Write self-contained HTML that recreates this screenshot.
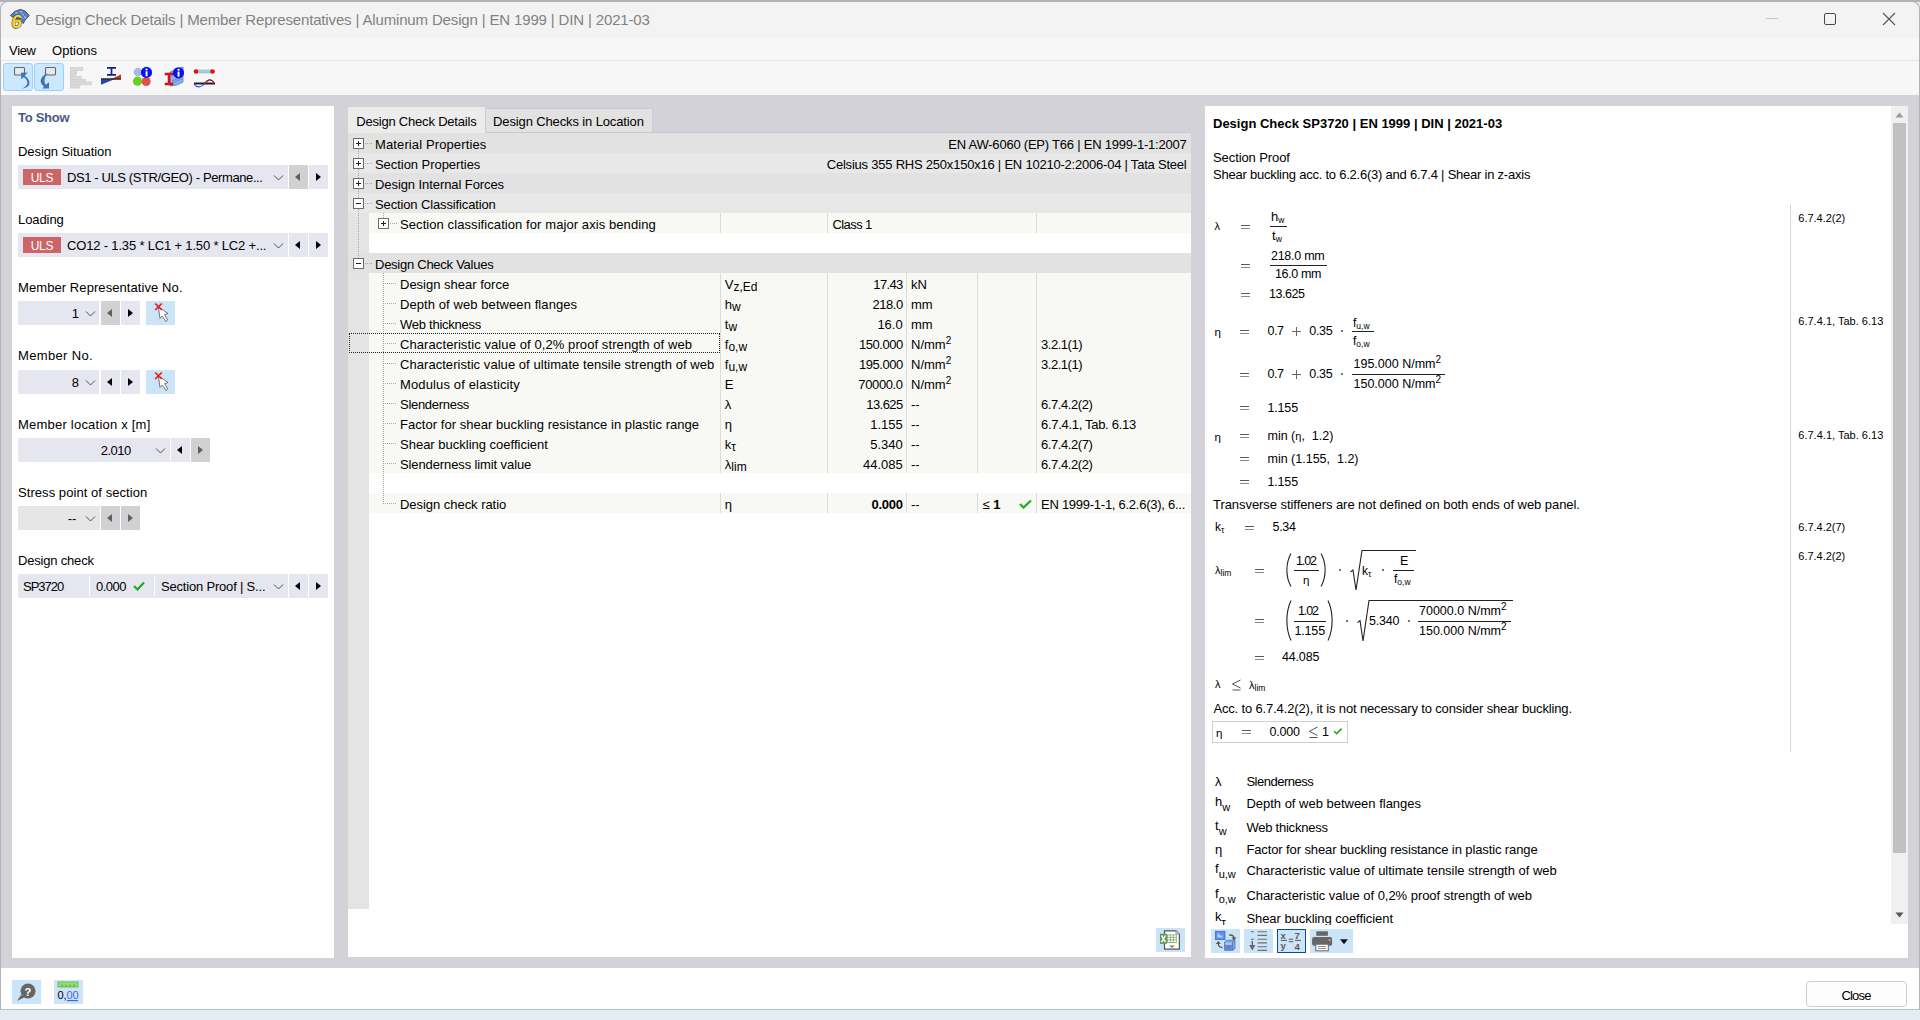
<!DOCTYPE html><html><head><meta charset="utf-8"><style>
*{box-sizing:border-box;margin:0;padding:0}
html,body{width:1920px;height:1020px;overflow:hidden}
body{position:relative;background:#e3ebf4;font-family:"Liberation Sans",sans-serif;font-size:13px;color:#000}
.a{position:absolute}
.t{position:absolute;white-space:nowrap;line-height:16px}
.nav{position:absolute;background:#e6e6f0;height:24px;width:19px}
.nav.dk{background:#d1d1d3}
.tri-l{position:absolute;left:6px;top:8px;width:0;height:0;border-top:4.5px solid transparent;border-bottom:4.5px solid transparent;border-right:5px solid #000}
.tri-r{position:absolute;left:7px;top:8px;width:0;height:0;border-top:4.5px solid transparent;border-bottom:4.5px solid transparent;border-left:5px solid #000}
.dk .tri-l{border-right-color:#5e5e5e}
.dk .tri-r{border-left-color:#5e5e5e}
.uls{position:absolute;background:#cc6666;color:#fff;width:38px;height:16px;font-size:12px;line-height:19px;text-align:center;letter-spacing:-0.2px}
sub{font-size:12px;vertical-align:-2px;line-height:0}
sup{font-size:10px;vertical-align:5px;line-height:0}
</style></head><body>
<div class="a" style="left:0px;top:0px;width:1920px;height:2px;background:#b0b4b9;"></div>
<div class="a" style="left:0;top:1px;width:1920px;height:1009px;background:#f3f3f3;border:1px solid #b3b3b3;border-bottom-color:#b9bec6;border-radius:8px 8px 0 0;overflow:hidden"></div>
<div class="a" style="left:1px;top:38px;width:1918px;height:22px;background:#f7f7f7;"></div>
<div class="a" style="left:1px;top:60px;width:1918px;height:1px;background:#e5e5e5;"></div>
<div class="a" style="left:1px;top:61px;width:1918px;height:34px;background:#f7f7f7;"></div>
<div class="a" style="left:1px;top:95px;width:1918px;height:873px;background:#d3d2d8;"></div>
<div class="a" style="left:1px;top:968px;width:1918px;height:41px;background:#ffffff;"></div>
<svg class="a" style="left:8px;top:7px" width="24" height="24" viewBox="0 0 24 24">
<path d="M2.4 8.5 L7 4.3 L12.5 2.4 L17 4 L21.2 8.5 L17 13 L15.3 16.5 L11 12 L6 11 Z" fill="#4f82cc" stroke="#4a4f5a" stroke-width="1"/>
<path d="M7.5 6 L9.5 5.5 M12 4.5 L14 5 M9 8.5 L11 8 M14 7 L16 8 M16 10 L18 10.5 M13 10 L14.5 11.5" stroke="#9cc4f4" stroke-width="1.3"/>
<text x="3.2" y="21.2" font-family="Liberation Sans" font-weight="bold" font-size="19" fill="#f6d22e" stroke="#3c3c3c" stroke-width="1" paint-order="stroke" transform="skewX(-8) translate(2.5,0)">6</text>
</svg>
<div class="t" style="left:35.0px;top:12px;font-size:15px;color:#828282;letter-spacing:-0.15px;">Design Check Details | Member Representatives | Aluminum Design | EN 1999 | DIN | 2021-03</div>
<div class="a" style="left:1766px;top:18px;width:12px;height:1px;background:#c4c4c4;"></div>
<div class="a" style="left:1824px;top:13px;width:12px;height:12px;border:1px solid #4a4a4a;border-radius:2px"></div>
<svg class="a" style="left:1882px;top:12px" width="14" height="14"><path d="M1 1 L13 13 M13 1 L1 13" stroke="#555" stroke-width="1.1"/></svg>
<div class="t" style="left:9.0px;top:43px;letter-spacing:-0.31px;">View</div>
<div class="t" style="left:52.0px;top:43px;letter-spacing:0.03px;">Options</div>
<div class="a" style="left:3px;top:63px;width:30px;height:28px;background:#cce8ff;border:1px solid #99d1ff;border-radius:3px"></div>
<div class="a" style="left:34px;top:63px;width:30px;height:28px;background:#cce8ff;border:1px solid #99d1ff;border-radius:3px"></div>
<svg class="a" style="left:3px;top:63px" width="30" height="28">
<rect x="11.5" y="4.5" width="10" height="7.5" rx="1" fill="#e8e8e8" stroke="#666" stroke-width="1.1"/>
<path d="M18 9.8 L24.6 9.5 L18.4 16.5 Z" fill="#3f74b0"/>
<path d="M20 12 C25 14 27.5 18.5 26 22 C24.8 24 21.5 25.5 19 25.6 C22.5 24 24.8 21.5 24.3 19 C23.8 16.5 22 15 20 13.8 Z" fill="#3f74b0"/>
</svg>
<svg class="a" style="left:34px;top:63px" width="30" height="28">
<rect x="11.5" y="4.5" width="10" height="7.5" rx="1" fill="#e8e8e8" stroke="#666" stroke-width="1.1"/>
<path d="M8.2 25.6 L15 25.6 L15 19 Z" fill="#3f74b0"/>
<path d="M13.5 10 C9.5 12 6 15.5 6.8 19 C7.3 21.5 9 23 11 24.2 L12.5 22.3 C10.8 20.8 10.2 18.5 10.6 16.5 C11 14 12.2 12 13.5 10 Z" fill="#3f74b0"/>
</svg>
<svg class="a" style="left:66px;top:63px" width="30" height="28" fill="#dcdcdc" stroke="#cfcfcf" stroke-width="0.8">
<rect x="4.4" y="4.4" width="12.4" height="3.1"/><rect x="4.4" y="7.7" width="6.2" height="3"/><rect x="4.4" y="11" width="5.1" height="2.3"/>
<rect x="4.4" y="13.5" width="10.6" height="2.8"/><rect x="4.4" y="16.5" width="15.1" height="2.3"/><rect x="4.4" y="19" width="21" height="2.8"/><rect x="4.4" y="22" width="9.3" height="3"/>
</svg>
<svg class="a" style="left:96px;top:63px" width="30" height="28">
<path d="M11 4.8 H20 M11 11.8 H20 M15.5 4.8 V11.8" stroke="#1a1a90" stroke-width="1.7"/>
<path d="M5 21.8 L5 16 L19 16 Z" fill="#2648a8"/>
<path d="M25 11.5 L25 16 L15 16 Z" fill="#d03010"/>
<rect x="5" y="15.2" width="20" height="1.6" fill="#333"/>
</svg>
<svg class="a" style="left:128px;top:63px" width="30" height="28">
<circle cx="10" cy="9" r="4.3" fill="#a9b8e6"/>
<circle cx="9.5" cy="18.2" r="4.6" fill="#6ad020"/>
<circle cx="18.2" cy="18.5" r="4.5" fill="#e05050"/>
<circle cx="18.5" cy="9.4" r="5.6" fill="#0a14e8"/>
<rect x="17.6" y="8.3" width="1.9" height="5" fill="#fff"/><rect x="17.6" y="5.6" width="1.9" height="1.8" fill="#fff"/>
</svg>
<svg class="a" style="left:160px;top:63px" width="30" height="28">
<path d="M10 9 L17 6 L23 4 L23 19 L17 22 L10 23 Z" fill="#8fb0ea" stroke="#5b7fc0" stroke-width="0.8"/>
<path d="M12 18 L22 14 M12 20 L22 16" stroke="#5b7fc0" stroke-width="0.8"/>
<path d="M5 10 H13 V12 H10 V20 H13 V22 H5 V20 H8 V12 H5 Z" fill="#f01010" stroke="#901010" stroke-width="0.5"/>
<circle cx="18.5" cy="9.8" r="5.6" fill="#0a14e8"/>
<rect x="17.6" y="8.6" width="1.9" height="5" fill="#fff"/><rect x="17.6" y="5.9" width="1.9" height="1.8" fill="#fff"/>
</svg>
<svg class="a" style="left:190px;top:63px" width="30" height="28">
<rect x="7" y="7" width="14" height="3" fill="#9cd0f8" stroke="#aaa" stroke-width="0.6"/>
<circle cx="6" cy="8.5" r="2.3" fill="#e01010"/><circle cx="22.5" cy="8.5" r="2.3" fill="#e01010"/>
<rect x="4" y="19.5" width="21" height="2" fill="#222"/>
<path d="M4 21 C7 25 11 25 14.5 20.5 C18 16 21 15.5 24 19.5" fill="none" stroke="#2a3ae8" stroke-width="1.2"/>
<path d="M14.5 20.5 C18 16 21 15.5 24 19.5" fill="none" stroke="#d01818" stroke-width="1.2"/>
</svg>
<div class="a" style="left:12px;top:106px;width:322px;height:852px;background:#fff;"></div>
<div class="a" style="left:348px;top:106px;width:843px;height:851px;background:#fff;"></div>
<div class="a" style="left:1205px;top:106px;width:703px;height:852px;background:#fff;"></div>
<div class="t" style="left:18.0px;top:110px;font-weight:bold;color:#4b5785;letter-spacing:-0.28px;">To Show</div>
<div class="t" style="left:18.0px;top:144px;letter-spacing:-0.08px;">Design Situation</div>
<div class="t" style="left:18.0px;top:212px;letter-spacing:-0.08px;">Loading</div>
<div class="t" style="left:18.0px;top:280px;letter-spacing:0.08px;">Member Representative No.</div>
<div class="t" style="left:18.0px;top:348px;letter-spacing:0.35px;">Member No.</div>
<div class="t" style="left:18.0px;top:417px;letter-spacing:0.22px;">Member location x [m]</div>
<div class="t" style="left:18.0px;top:485px;letter-spacing:0.06px;">Stress point of section</div>
<div class="t" style="left:18.0px;top:553px;letter-spacing:-0.19px;">Design check</div>
<div class="a" style="left:18px;top:165px;width:270px;height:24px;background:#e6e6f0;"></div>
<div class="uls" style="left:23px;top:169px">ULS</div>
<div class="t" style="left:67.0px;top:170px;letter-spacing:-0.39px;">DS1 - ULS (STR/GEO) - Permane...</div>
<svg class="a" style="left:272px;top:174px" width="12" height="8"><polyline points="2,1.5 6.5,6 11,1.5" fill="none" stroke="#505050" stroke-width="1"/></svg>
<div class="nav dk" style="left:289px;top:165px"><div class="tri-l"></div></div>
<div class="nav" style="left:309px;top:165px"><div class="tri-r"></div></div>
<div class="a" style="left:18px;top:233px;width:270px;height:24px;background:#e6e6f0;"></div>
<div class="uls" style="left:23px;top:237px">ULS</div>
<div class="t" style="left:67.0px;top:238px;letter-spacing:-0.17px;">CO12 - 1.35 * LC1 + 1.50 * LC2 +...</div>
<svg class="a" style="left:272px;top:242px" width="12" height="8"><polyline points="2,1.5 6.5,6 11,1.5" fill="none" stroke="#505050" stroke-width="1"/></svg>
<div class="nav" style="left:289px;top:233px"><div class="tri-l"></div></div>
<div class="nav" style="left:309px;top:233px"><div class="tri-r"></div></div>
<div class="a" style="left:18px;top:301px;width:81px;height:24px;background:#e6e6f0;"></div>
<div class="t" style="right:1841.0px;top:306px;">1</div>
<svg class="a" style="left:84px;top:310px" width="12" height="8"><polyline points="2,1.5 6.5,6 11,1.5" fill="none" stroke="#505050" stroke-width="1"/></svg>
<div class="nav dk" style="left:101px;top:301px"><div class="tri-l"></div></div>
<div class="nav" style="left:121px;top:301px"><div class="tri-r"></div></div>
<div class="a" style="left:146px;top:301px;width:29px;height:24px;background:#cce4f7"><svg class="a" style="left:0;top:0" width="29" height="24"><path d="M12.3 5.7 L14 17.5 L16.3 15 L19.8 20.5 L21.7 19 L18.6 13.6 L22 12.5 Z" fill="#fff" stroke="#666" stroke-width="0.9"/><path d="M9.2 2.5 L15.8 9 M15.8 2.5 L9.2 9" stroke="#f01818" stroke-width="1.7"/></svg></div>
<div class="a" style="left:18px;top:370px;width:81px;height:24px;background:#e6e6f0;"></div>
<div class="t" style="right:1841.0px;top:375px;">8</div>
<svg class="a" style="left:84px;top:379px" width="12" height="8"><polyline points="2,1.5 6.5,6 11,1.5" fill="none" stroke="#505050" stroke-width="1"/></svg>
<div class="nav" style="left:101px;top:370px"><div class="tri-l"></div></div>
<div class="nav" style="left:121px;top:370px"><div class="tri-r"></div></div>
<div class="a" style="left:146px;top:370px;width:29px;height:24px;background:#cce4f7"><svg class="a" style="left:0;top:0" width="29" height="24"><path d="M12.3 5.7 L14 17.5 L16.3 15 L19.8 20.5 L21.7 19 L18.6 13.6 L22 12.5 Z" fill="#fff" stroke="#666" stroke-width="0.9"/><path d="M9.2 2.5 L15.8 9 M15.8 2.5 L9.2 9" stroke="#f01818" stroke-width="1.7"/></svg></div>
<div class="a" style="left:18px;top:438px;width:152px;height:24px;background:#e6e6f0;"></div>
<div class="t" style="right:1789.4px;top:443px;letter-spacing:-0.53px;">2.010</div>
<svg class="a" style="left:154px;top:447px" width="12" height="8"><polyline points="2,1.5 6.5,6 11,1.5" fill="none" stroke="#505050" stroke-width="1"/></svg>
<div class="nav" style="left:171px;top:438px"><div class="tri-l"></div></div>
<div class="nav dk" style="left:191px;top:438px"><div class="tri-r"></div></div>
<div class="a" style="left:18px;top:506px;width:82px;height:24px;background:#e6e6e6;"></div>
<div class="t" style="right:1843.7px;top:511px;">--</div>
<svg class="a" style="left:84px;top:515px" width="12" height="8"><polyline points="2,1.5 6.5,6 11,1.5" fill="none" stroke="#505050" stroke-width="1"/></svg>
<div class="nav dk" style="left:101px;top:506px"><div class="tri-l"></div></div>
<div class="nav dk" style="left:121px;top:506px"><div class="tri-r"></div></div>
<div class="a" style="left:18px;top:574px;width:270px;height:24px;background:#e6e6f0;"></div>
<div class="a" style="left:89px;top:576px;width:1px;height:20px;background:#fff;"></div>
<div class="a" style="left:154px;top:576px;width:1px;height:20px;background:#fff;"></div>
<div class="t" style="left:23.0px;top:579px;letter-spacing:-1.01px;">SP3720</div>
<div class="t" style="left:96.0px;top:579px;letter-spacing:-0.51px;">0.000</div>
<svg class="a" style="left:133px;top:581px" width="12" height="10"><path d="M1 5 L4.5 8.5 L11 1.5" fill="none" stroke="#22aa22" stroke-width="2.2"/></svg>
<div class="t" style="left:161.0px;top:579px;letter-spacing:-0.19px;">Section Proof | S...</div>
<svg class="a" style="left:272px;top:583px" width="12" height="8"><polyline points="2,1.5 6.5,6 11,1.5" fill="none" stroke="#505050" stroke-width="1"/></svg>
<div class="nav" style="left:289px;top:574px"><div class="tri-l"></div></div>
<div class="nav" style="left:309px;top:574px"><div class="tri-r"></div></div>
<div class="a" style="left:348px;top:106px;width:843px;height:27px;background:#d3d2d8;"></div>
<div class="a" style="left:348px;top:107px;width:137px;height:26px;background:#ececec;"></div>
<div class="a" style="left:485px;top:108px;width:168px;height:25px;background:#e2e2e2;border:1px solid #cbcbd6;border-bottom:none"></div>
<div class="a" style="left:485px;top:132px;width:706px;height:1px;background:#cbcbd6;"></div>
<div class="t" style="left:356.2px;top:114px;letter-spacing:-0.20px;">Design Check Details</div>
<div class="t" style="left:493.1px;top:114px;letter-spacing:-0.13px;">Design Checks in Location</div>
<div class="a" style="left:348px;top:133px;width:843px;height:20px;background:#e2e2e2;"></div>
<div class="a" style="left:348px;top:153px;width:843px;height:20px;background:#e8e8e8;"></div>
<div class="a" style="left:348px;top:173px;width:843px;height:20px;background:#e2e2e2;"></div>
<div class="a" style="left:348px;top:193px;width:843px;height:20px;background:#e8e8e8;"></div>
<div class="a" style="left:348px;top:213px;width:21px;height:696px;background:#e4e4e4;"></div>
<div class="a" style="left:369px;top:213px;width:822px;height:20px;background:#f8f8f4;"></div>
<div class="a" style="left:348px;top:253px;width:843px;height:20px;background:#e2e2e2;"></div>
<div class="a" style="left:369px;top:273px;width:822px;height:200px;background:#f8f8f4;"></div>
<div class="a" style="left:369px;top:493px;width:822px;height:20px;background:#f8f8f4;"></div>
<div class="a" style="left:720px;top:213px;width:1px;height:20px;background:#dcdcdc;"></div>
<div class="a" style="left:827px;top:213px;width:1px;height:20px;background:#dcdcdc;"></div>
<div class="a" style="left:1036px;top:213px;width:1px;height:20px;background:#dcdcdc;"></div>
<div class="a" style="left:720px;top:273px;width:1px;height:200px;background:#dcdcdc;"></div>
<div class="a" style="left:720px;top:493px;width:1px;height:20px;background:#dcdcdc;"></div>
<div class="a" style="left:827px;top:273px;width:1px;height:200px;background:#dcdcdc;"></div>
<div class="a" style="left:827px;top:493px;width:1px;height:20px;background:#dcdcdc;"></div>
<div class="a" style="left:906px;top:273px;width:1px;height:200px;background:#dcdcdc;"></div>
<div class="a" style="left:906px;top:493px;width:1px;height:20px;background:#dcdcdc;"></div>
<div class="a" style="left:977px;top:273px;width:1px;height:200px;background:#dcdcdc;"></div>
<div class="a" style="left:977px;top:493px;width:1px;height:20px;background:#dcdcdc;"></div>
<div class="a" style="left:1036px;top:273px;width:1px;height:200px;background:#dcdcdc;"></div>
<div class="a" style="left:1036px;top:493px;width:1px;height:20px;background:#dcdcdc;"></div>
<div class="a" style="left:358px;top:149px;width:1px;height:110px;background:repeating-linear-gradient(180deg,#a8a8a8 0 1px,transparent 1px 2px)"></div>
<div class="a" style="left:383px;top:213px;width:1px;height:5px;background:repeating-linear-gradient(180deg,#a8a8a8 0 1px,transparent 1px 2px)"></div>
<div class="a" style="left:383px;top:273px;width:1px;height:231px;background:repeating-linear-gradient(180deg,#a8a8a8 0 1px,transparent 1px 2px)"></div>
<div class="a" style="left:365px;top:143px;width:7px;height:1px;background:repeating-linear-gradient(90deg,#a8a8a8 0 1px,transparent 1px 2px)"></div>
<svg class="a" style="left:353px;top:138px" width="11" height="11"><rect x="0.5" y="0.5" width="10" height="10" fill="#fff" stroke="#6d6d6d"/><path d="M3 5.5 H8 M5.5 3 V8" stroke="#222" stroke-width="1"/></svg>
<div class="t" style="left:375.0px;top:137px;letter-spacing:0.12px;">Material Properties</div>
<div class="a" style="left:365px;top:163px;width:7px;height:1px;background:repeating-linear-gradient(90deg,#a8a8a8 0 1px,transparent 1px 2px)"></div>
<svg class="a" style="left:353px;top:158px" width="11" height="11"><rect x="0.5" y="0.5" width="10" height="10" fill="#fff" stroke="#6d6d6d"/><path d="M3 5.5 H8 M5.5 3 V8" stroke="#222" stroke-width="1"/></svg>
<div class="t" style="left:375.0px;top:157px;letter-spacing:-0.05px;">Section Properties</div>
<div class="a" style="left:365px;top:183px;width:7px;height:1px;background:repeating-linear-gradient(90deg,#a8a8a8 0 1px,transparent 1px 2px)"></div>
<svg class="a" style="left:353px;top:178px" width="11" height="11"><rect x="0.5" y="0.5" width="10" height="10" fill="#fff" stroke="#6d6d6d"/><path d="M3 5.5 H8 M5.5 3 V8" stroke="#222" stroke-width="1"/></svg>
<div class="t" style="left:375.0px;top:177px;letter-spacing:-0.08px;">Design Internal Forces</div>
<div class="a" style="left:365px;top:203px;width:7px;height:1px;background:repeating-linear-gradient(90deg,#a8a8a8 0 1px,transparent 1px 2px)"></div>
<svg class="a" style="left:353px;top:198px" width="11" height="11"><rect x="0.5" y="0.5" width="10" height="10" fill="#fff" stroke="#6d6d6d"/><path d="M3 5.5 H8" stroke="#222" stroke-width="1"/></svg>
<div class="t" style="left:375.0px;top:197px;letter-spacing:-0.13px;">Section Classification</div>
<div class="a" style="left:365px;top:263px;width:7px;height:1px;background:repeating-linear-gradient(90deg,#a8a8a8 0 1px,transparent 1px 2px)"></div>
<svg class="a" style="left:353px;top:258px" width="11" height="11"><rect x="0.5" y="0.5" width="10" height="10" fill="#fff" stroke="#6d6d6d"/><path d="M3 5.5 H8" stroke="#222" stroke-width="1"/></svg>
<div class="t" style="left:375.0px;top:257px;letter-spacing:-0.26px;">Design Check Values</div>
<div class="a" style="left:390px;top:223px;width:7px;height:1px;background:repeating-linear-gradient(90deg,#a8a8a8 0 1px,transparent 1px 2px)"></div>
<svg class="a" style="left:378px;top:218px" width="11" height="11"><rect x="0.5" y="0.5" width="10" height="10" fill="#fff" stroke="#6d6d6d"/><path d="M3 5.5 H8 M5.5 3 V8" stroke="#222" stroke-width="1"/></svg>
<div class="t" style="left:400.0px;top:217px;letter-spacing:0.08px;">Section classification for major axis bending</div>
<div class="t" style="left:832.5px;top:217px;letter-spacing:-0.59px;">Class 1</div>
<div class="t" style="right:733.5px;top:137px;letter-spacing:-0.22px;">EN AW-6060 (EP) T66 | EN 1999-1-1:2007</div>
<div class="t" style="right:733.5px;top:157px;letter-spacing:-0.22px;">Celsius 355 RHS 250x150x16 | EN 10210-2:2006-04 | Tata Steel</div>
<div class="a" style="left:385px;top:283px;width:12px;height:1px;background:repeating-linear-gradient(90deg,#a8a8a8 0 1px,transparent 1px 2px)"></div>
<div class="t" style="left:400.0px;top:277px;">Design shear force</div>
<div class="t" style="left:724.8px;top:277px;">V<sub>z,Ed</sub></div>
<div class="t" style="right:1017.3px;top:277px;letter-spacing:-0.63px;">17.43</div>
<div class="t" style="left:911.0px;top:277px;">kN</div>
<div class="a" style="left:385px;top:303px;width:12px;height:1px;background:repeating-linear-gradient(90deg,#a8a8a8 0 1px,transparent 1px 2px)"></div>
<div class="t" style="left:400.0px;top:297px;letter-spacing:0.08px;">Depth of web between flanges</div>
<div class="t" style="left:724.8px;top:297px;">h<sub>w</sub></div>
<div class="t" style="right:1017.3px;top:297px;letter-spacing:-0.46px;">218.0</div>
<div class="t" style="left:911.0px;top:297px;">mm</div>
<div class="a" style="left:385px;top:323px;width:12px;height:1px;background:repeating-linear-gradient(90deg,#a8a8a8 0 1px,transparent 1px 2px)"></div>
<div class="t" style="left:400.0px;top:317px;letter-spacing:-0.25px;">Web thickness</div>
<div class="t" style="left:724.8px;top:317px;">t<sub>w</sub></div>
<div class="t" style="right:1017.3px;top:317px;">16.0</div>
<div class="t" style="left:911.0px;top:317px;">mm</div>
<div class="a" style="left:385px;top:343px;width:12px;height:1px;background:repeating-linear-gradient(90deg,#a8a8a8 0 1px,transparent 1px 2px)"></div>
<div class="t" style="left:400.0px;top:337px;letter-spacing:0.09px;">Characteristic value of 0,2% proof strength of web</div>
<div class="t" style="left:724.8px;top:337px;">f<sub>o,w</sub></div>
<div class="t" style="right:1017.3px;top:337px;letter-spacing:-0.47px;">150.000</div>
<div class="t" style="left:911.0px;top:337px;">N/mm<sup>2</sup></div>
<div class="t" style="left:1041.0px;top:337px;letter-spacing:-0.46px;">3.2.1(1)</div>
<div class="a" style="left:385px;top:363px;width:12px;height:1px;background:repeating-linear-gradient(90deg,#a8a8a8 0 1px,transparent 1px 2px)"></div>
<div class="t" style="left:400.0px;top:357px;letter-spacing:0.05px;">Characteristic value of ultimate tensile strength of web</div>
<div class="t" style="left:724.8px;top:357px;">f<sub>u,w</sub></div>
<div class="t" style="right:1017.3px;top:357px;letter-spacing:-0.47px;">195.000</div>
<div class="t" style="left:911.0px;top:357px;">N/mm<sup>2</sup></div>
<div class="t" style="left:1041.0px;top:357px;letter-spacing:-0.46px;">3.2.1(1)</div>
<div class="a" style="left:385px;top:383px;width:12px;height:1px;background:repeating-linear-gradient(90deg,#a8a8a8 0 1px,transparent 1px 2px)"></div>
<div class="t" style="left:400.0px;top:377px;letter-spacing:0.14px;">Modulus of elasticity</div>
<div class="t" style="left:724.8px;top:377px;">E</div>
<div class="t" style="right:1017.3px;top:377px;letter-spacing:-0.38px;">70000.0</div>
<div class="t" style="left:911.0px;top:377px;">N/mm<sup>2</sup></div>
<div class="a" style="left:385px;top:403px;width:12px;height:1px;background:repeating-linear-gradient(90deg,#a8a8a8 0 1px,transparent 1px 2px)"></div>
<div class="t" style="left:400.0px;top:397px;letter-spacing:-0.29px;">Slenderness</div>
<div class="t" style="left:724.8px;top:397px;">&lambda;</div>
<div class="t" style="right:1017.3px;top:397px;letter-spacing:-0.55px;">13.625</div>
<div class="t" style="left:911.0px;top:397px;">--</div>
<div class="t" style="left:1041.0px;top:397px;letter-spacing:-0.43px;">6.7.4.2(2)</div>
<div class="a" style="left:385px;top:423px;width:12px;height:1px;background:repeating-linear-gradient(90deg,#a8a8a8 0 1px,transparent 1px 2px)"></div>
<div class="t" style="left:400.0px;top:417px;letter-spacing:0.04px;">Factor for shear buckling resistance in plastic range</div>
<div class="t" style="left:724.8px;top:417px;">&eta;</div>
<div class="t" style="right:1017.3px;top:417px;">1.155</div>
<div class="t" style="left:911.0px;top:417px;">--</div>
<div class="t" style="left:1041.0px;top:417px;letter-spacing:-0.30px;">6.7.4.1, Tab. 6.13</div>
<div class="a" style="left:385px;top:443px;width:12px;height:1px;background:repeating-linear-gradient(90deg,#a8a8a8 0 1px,transparent 1px 2px)"></div>
<div class="t" style="left:400.0px;top:437px;">Shear buckling coefficient</div>
<div class="t" style="left:724.8px;top:437px;">k<sub>&tau;</sub></div>
<div class="t" style="right:1017.3px;top:437px;">5.340</div>
<div class="t" style="left:911.0px;top:437px;">--</div>
<div class="t" style="left:1041.0px;top:437px;letter-spacing:-0.43px;">6.7.4.2(7)</div>
<div class="a" style="left:385px;top:463px;width:12px;height:1px;background:repeating-linear-gradient(90deg,#a8a8a8 0 1px,transparent 1px 2px)"></div>
<div class="t" style="left:400.0px;top:457px;letter-spacing:-0.11px;">Slenderness limit value</div>
<div class="t" style="left:724.8px;top:457px;">&lambda;<sub>lim</sub></div>
<div class="t" style="right:1017.3px;top:457px;">44.085</div>
<div class="t" style="left:911.0px;top:457px;">--</div>
<div class="t" style="left:1041.0px;top:457px;letter-spacing:-0.43px;">6.7.4.2(2)</div>
<div class="a" style="left:385px;top:503px;width:12px;height:1px;background:repeating-linear-gradient(90deg,#a8a8a8 0 1px,transparent 1px 2px)"></div>
<div class="t" style="left:400.0px;top:497px;letter-spacing:-0.04px;">Design check ratio</div>
<div class="t" style="left:724.8px;top:497px;">&eta;</div>
<div class="t" style="right:1017.3px;top:497px;font-weight:bold;letter-spacing:-0.28px;">0.000</div>
<div class="t" style="left:911.0px;top:497px;">--</div>
<div class="t" style="left:982.6px;top:497px;">&le; <b>1</b></div>
<svg class="a" style="left:1019px;top:499px" width="13" height="10"><path d="M1 5 L4.5 8.5 L12 1.5" fill="none" stroke="#22aa22" stroke-width="2.2"/></svg>
<div class="t" style="left:1041.0px;top:497px;letter-spacing:-0.26px;">EN 1999-1-1, 6.2.6(3), 6...</div>
<div class="a" style="left:349px;top:333px;width:371px;height:20px;border:1px dotted #222"></div>
<div class="a" style="left:1156px;top:928px;width:29px;height:24px;background:#cce4f7"><svg width="29" height="24">
<path d="M8.5 2.8 H20 L23.4 6.2 V21.2 H8.5 Z" fill="#fff" stroke="#555" stroke-width="1.2"/><path d="M20 2.8 V6.2 H23.4" fill="#ddd" stroke="#888" stroke-width="0.8"/>
<rect x="11.5" y="6.9" width="8.8" height="7.6" fill="#fff" stroke="#7aa86a" stroke-width="0.8"/>
<path d="M11.5 9.4 H20.3 M11.5 11.9 H20.3 M14.4 6.9 V14.5 M17.3 6.9 V14.5" stroke="#7aa86a" stroke-width="0.8"/>
<rect x="4" y="5.7" width="7" height="10.2" fill="#6a9a5a"/><path d="M5.6 7.5 L9.4 14.1 M9.4 7.5 L5.6 14.1" stroke="#fff" stroke-width="1.5"/>
<path d="M13 17.5 H19 L16 20 Z" fill="#6a9a5a"/>
</svg></div>
<div class="t" style="left:1213.0px;top:116px;font-weight:bold;">Design Check SP3720 | EN 1999 | DIN | 2021-03</div>
<div class="t" style="left:1213.0px;top:150px;letter-spacing:-0.09px;">Section Proof</div>
<div class="t" style="left:1213.0px;top:167px;letter-spacing:-0.23px;">Shear buckling acc. to 6.2.6(3) and 6.7.4 | Shear in z-axis</div>
<div class="t" style="left:1214.5px;top:218px;font-size:11px;">λ</div>
<div class="a" style="left:1241px;top:225px;width:9px;height:1px;background:#5a5a5a;"></div>
<div class="a" style="left:1241px;top:228px;width:9px;height:1px;background:#8a8a8a;"></div>
<div class="t" style="left:1271.0px;top:209px;">h<span style="font-size:8.5px;position:relative;top:2px">w</span></div>
<div class="a" style="left:1270px;top:226px;width:17px;height:1px;background:#222;"></div>
<div class="t" style="left:1272.0px;top:228px;">t<span style="font-size:8.5px;position:relative;top:2px">w</span></div>
<div class="a" style="left:1241px;top:264px;width:9px;height:1px;background:#5a5a5a;"></div>
<div class="a" style="left:1241px;top:267px;width:9px;height:1px;background:#8a8a8a;"></div>
<div class="t" style="left:1271.0px;top:248px;font-size:12.5px;letter-spacing:-0.27px;">218.0 mm</div>
<div class="a" style="left:1270px;top:265px;width:57px;height:1px;background:#222;"></div>
<div class="t" style="left:1275.0px;top:266px;font-size:12.5px;letter-spacing:-0.37px;">16.0 mm</div>
<div class="a" style="left:1241px;top:293px;width:9px;height:1px;background:#5a5a5a;"></div>
<div class="a" style="left:1241px;top:296px;width:9px;height:1px;background:#8a8a8a;"></div>
<div class="t" style="left:1269.0px;top:286px;font-size:12.5px;letter-spacing:-0.45px;">13.625</div>
<div class="t" style="left:1214.5px;top:324px;font-size:11.5px;">η</div>
<div class="a" style="left:1240px;top:330px;width:9px;height:1px;background:#5a5a5a;"></div>
<div class="a" style="left:1240px;top:333px;width:9px;height:1px;background:#8a8a8a;"></div>
<div class="t" style="left:1267.5px;top:323px;font-size:12.5px;letter-spacing:-0.44px;">0.7</div>
<div class="a" style="left:1292px;top:331px;width:9px;height:1px;background:#666;"></div>
<div class="a" style="left:1296px;top:327px;width:1px;height:9px;background:#666;"></div>
<div class="t" style="left:1309.3px;top:323px;font-size:12.5px;letter-spacing:-0.34px;">0.35</div>
<div class="a" style="left:1341px;top:330px;width:2px;height:2px;background:#444;border-radius:1px"></div>
<div class="t" style="left:1353.0px;top:315px;font-size:12px;">f<span style="font-size:8.5px;position:relative;top:2px">u,w</span></div>
<div class="a" style="left:1352px;top:331px;width:22px;height:1px;background:#222;"></div>
<div class="t" style="left:1353.0px;top:333px;font-size:12px;">f<span style="font-size:8.5px;position:relative;top:2px">o,w</span></div>
<div class="a" style="left:1240px;top:373px;width:9px;height:1px;background:#5a5a5a;"></div>
<div class="a" style="left:1240px;top:376px;width:9px;height:1px;background:#8a8a8a;"></div>
<div class="t" style="left:1267.5px;top:366px;font-size:12.5px;letter-spacing:-0.44px;">0.7</div>
<div class="a" style="left:1292px;top:374px;width:9px;height:1px;background:#666;"></div>
<div class="a" style="left:1296px;top:370px;width:1px;height:9px;background:#666;"></div>
<div class="t" style="left:1309.3px;top:366px;font-size:12.5px;letter-spacing:-0.34px;">0.35</div>
<div class="a" style="left:1341px;top:373px;width:2px;height:2px;background:#444;border-radius:1px"></div>
<div class="t" style="left:1353.5px;top:356px;font-size:12.5px;">195.000 N/mm<sup>2</sup></div>
<div class="a" style="left:1352px;top:374px;width:93px;height:1px;background:#222;"></div>
<div class="t" style="left:1353.5px;top:376px;font-size:12.5px;">150.000 N/mm<sup>2</sup></div>
<div class="a" style="left:1240px;top:406px;width:9px;height:1px;background:#5a5a5a;"></div>
<div class="a" style="left:1240px;top:409px;width:9px;height:1px;background:#8a8a8a;"></div>
<div class="t" style="left:1267.5px;top:400px;font-size:12.5px;letter-spacing:-0.17px;">1.155</div>
<div class="t" style="left:1214.5px;top:429px;font-size:11.5px;">η</div>
<div class="a" style="left:1240px;top:434px;width:9px;height:1px;background:#5a5a5a;"></div>
<div class="a" style="left:1240px;top:437px;width:9px;height:1px;background:#8a8a8a;"></div>
<div class="t" style="left:1267.5px;top:428px;font-size:12.5px;">min (<span style="font-size:11px">η</span>,&nbsp; 1.2)</div>
<div class="a" style="left:1240px;top:457px;width:9px;height:1px;background:#5a5a5a;"></div>
<div class="a" style="left:1240px;top:460px;width:9px;height:1px;background:#8a8a8a;"></div>
<div class="t" style="left:1267.5px;top:451px;font-size:12.5px;">min (1.155,&nbsp; 1.2)</div>
<div class="a" style="left:1240px;top:480px;width:9px;height:1px;background:#5a5a5a;"></div>
<div class="a" style="left:1240px;top:483px;width:9px;height:1px;background:#8a8a8a;"></div>
<div class="t" style="left:1267.5px;top:474px;font-size:12.5px;letter-spacing:-0.17px;">1.155</div>
<div class="t" style="left:1213.0px;top:497px;letter-spacing:-0.06px;">Transverse stiffeners are not defined on both ends of web panel.</div>
<div class="t" style="left:1215.0px;top:519px;font-size:12px;">k<span style="font-size:8.5px;position:relative;top:2px">τ</span></div>
<div class="a" style="left:1245px;top:526px;width:9px;height:1px;background:#5a5a5a;"></div>
<div class="a" style="left:1245px;top:529px;width:9px;height:1px;background:#8a8a8a;"></div>
<div class="t" style="left:1272.5px;top:519px;font-size:12.5px;letter-spacing:-0.28px;">5.34</div>
<div class="t" style="left:1215.0px;top:562px;font-size:11px;">λ<span style="font-size:8.5px;position:relative;top:2px">lim</span></div>
<div class="a" style="left:1255px;top:569px;width:9px;height:1px;background:#5a5a5a;"></div>
<div class="a" style="left:1255px;top:572px;width:9px;height:1px;background:#8a8a8a;"></div>
<svg class="a" style="left:1284px;top:553px" width="8" height="34"><path d="M7 0.5 C1.5 10.2 1.5 23.8 7 33.5" fill="none" stroke="#222" stroke-width="1.1"/></svg>
<svg class="a" style="left:1320px;top:553px" width="8" height="34"><path d="M1 0.5 C6.5 10.2 6.5 23.8 1 33.5" fill="none" stroke="#222" stroke-width="1.1"/></svg>
<div class="t" style="left:1296.0px;top:553px;font-size:12.5px;letter-spacing:-1.11px;">1.02</div>
<div class="a" style="left:1294px;top:570px;width:25px;height:1px;background:#222;"></div>
<div class="t" style="left:1303.0px;top:572px;font-size:11.5px;">η</div>
<div class="a" style="left:1339px;top:569px;width:2px;height:2px;background:#444;border-radius:1px"></div>
<svg class="a" style="left:1350px;top:550px" width="67" height="41"><path d="M0.5 22.0 L3 20.0 L6 40.0 L12 0.5 L66 0.5" fill="none" stroke="#222" stroke-width="1.1"/></svg>
<div class="t" style="left:1362.0px;top:563px;font-size:12px;">k<span style="font-size:8.5px;position:relative;top:2px">τ</span></div>
<div class="a" style="left:1382px;top:569px;width:2px;height:2px;background:#444;border-radius:1px"></div>
<div class="t" style="left:1400.0px;top:553px;font-size:12.5px;">E</div>
<div class="a" style="left:1393px;top:570px;width:21px;height:1px;background:#222;"></div>
<div class="t" style="left:1394.0px;top:571px;font-size:12px;">f<span style="font-size:8.5px;position:relative;top:2px">o,w</span></div>
<div class="a" style="left:1255px;top:619px;width:9px;height:1px;background:#5a5a5a;"></div>
<div class="a" style="left:1255px;top:622px;width:9px;height:1px;background:#8a8a8a;"></div>
<svg class="a" style="left:1284px;top:600px" width="8" height="41"><path d="M7 0.5 C1.5 12.3 1.5 28.7 7 40.5" fill="none" stroke="#222" stroke-width="1.1"/></svg>
<svg class="a" style="left:1327px;top:600px" width="8" height="41"><path d="M1 0.5 C6.5 12.3 6.5 28.7 1 40.5" fill="none" stroke="#222" stroke-width="1.1"/></svg>
<div class="t" style="left:1298.0px;top:603px;font-size:12.5px;letter-spacing:-1.11px;">1.02</div>
<div class="a" style="left:1294px;top:621px;width:32px;height:1px;background:#222;"></div>
<div class="t" style="left:1294.5px;top:623px;font-size:12.5px;letter-spacing:-0.17px;">1.155</div>
<div class="a" style="left:1346px;top:620px;width:2px;height:2px;background:#444;border-radius:1px"></div>
<svg class="a" style="left:1357px;top:600px" width="157" height="42"><path d="M0.5 22.6 L3 20.5 L6 41.0 L12 0.5 L156 0.5" fill="none" stroke="#222" stroke-width="1.1"/></svg>
<div class="t" style="left:1369.0px;top:613px;font-size:12.5px;letter-spacing:-0.20px;">5.340</div>
<div class="a" style="left:1408px;top:620px;width:2px;height:2px;background:#444;border-radius:1px"></div>
<div class="t" style="left:1419.0px;top:603px;font-size:12.5px;">70000.0 N/mm<sup>2</sup></div>
<div class="a" style="left:1418px;top:621px;width:93px;height:1px;background:#222;"></div>
<div class="t" style="left:1419.0px;top:623px;font-size:12.5px;">150.000 N/mm<sup>2</sup></div>
<div class="a" style="left:1255px;top:656px;width:9px;height:1px;background:#5a5a5a;"></div>
<div class="a" style="left:1255px;top:659px;width:9px;height:1px;background:#8a8a8a;"></div>
<div class="t" style="left:1282.0px;top:649px;font-size:12.5px;letter-spacing:-0.17px;">44.085</div>
<div class="t" style="left:1215.0px;top:676px;font-size:11px;">λ</div>
<svg class="a" style="left:1231px;top:679px" width="11" height="12"><path d="M9.5 1 L1.5 5 L9.5 9 M1.5 11 H9.5" fill="none" stroke="#555" stroke-width="1"/></svg>
<div class="t" style="left:1249.0px;top:677px;font-size:11px;">λ<span style="font-size:8.5px;position:relative;top:2px">lim</span></div>
<div class="t" style="left:1213.4px;top:701px;letter-spacing:-0.15px;">Acc. to 6.7.4.2(2), it is not necessary to consider shear buckling.</div>
<div class="a" style="left:1212px;top:721px;width:136px;height:22px;border:1px solid #d0d0d0"></div>
<div class="t" style="left:1216.0px;top:725px;font-size:11.5px;">η</div>
<div class="a" style="left:1242px;top:730px;width:9px;height:1px;background:#5a5a5a;"></div>
<div class="a" style="left:1242px;top:733px;width:9px;height:1px;background:#8a8a8a;"></div>
<div class="t" style="left:1269.4px;top:724px;font-size:12.5px;letter-spacing:-0.17px;">0.000</div>
<svg class="a" style="left:1308px;top:726px" width="11" height="13"><path d="M9.5 1 L1.5 5.3 L9.5 9.6 M1.5 11.5 H9.5" fill="none" stroke="#555" stroke-width="1"/></svg>
<div class="t" style="left:1322.0px;top:724px;font-size:12.5px;">1</div>
<svg class="a" style="left:1333px;top:727px" width="10" height="8"><path d="M1.2 4.2 L3.6 6.6 L8.6 1.6" fill="none" stroke="#22aa22" stroke-width="1.6"/></svg>
<div class="a" style="left:1790px;top:205px;width:1px;height:547px;background:#d4d4d4;"></div>
<div class="t" style="left:1798.3px;top:210px;font-size:11px;letter-spacing:-0.02px;">6.7.4.2(2)</div>
<div class="t" style="left:1798.3px;top:313px;font-size:11px;letter-spacing:0.01px;">6.7.4.1, Tab. 6.13</div>
<div class="t" style="left:1798.3px;top:427px;font-size:11px;letter-spacing:0.01px;">6.7.4.1, Tab. 6.13</div>
<div class="t" style="left:1798.3px;top:519px;font-size:11px;letter-spacing:-0.02px;">6.7.4.2(7)</div>
<div class="t" style="left:1798.3px;top:548px;font-size:11px;letter-spacing:-0.02px;">6.7.4.2(2)</div>
<div class="a" style="left:1205px;top:760px;width:686px;height:165px;overflow:hidden">
<div class="t" style="left:10.0px;top:14px;">λ</div>
<div class="t" style="left:41.4px;top:14px;letter-spacing:-0.48px;">Slenderness</div>
<div class="t" style="left:10.0px;top:34px;">h<span style="font-size:11px;position:relative;top:5px">w</span></div>
<div class="t" style="left:41.4px;top:36px;letter-spacing:-0.01px;">Depth of web between flanges</div>
<div class="t" style="left:10.0px;top:58px;">t<span style="font-size:11px;position:relative;top:5px">w</span></div>
<div class="t" style="left:41.4px;top:60px;letter-spacing:-0.23px;">Web thickness</div>
<div class="t" style="left:10.0px;top:82px;">η</div>
<div class="t" style="left:41.4px;top:82px;letter-spacing:-0.11px;">Factor for shear buckling resistance in plastic range</div>
<div class="t" style="left:10.0px;top:101px;">f<span style="font-size:11px;position:relative;top:5px">u,w</span></div>
<div class="t" style="left:41.4px;top:103px;letter-spacing:-0.02px;">Characteristic value of ultimate tensile strength of web</div>
<div class="t" style="left:10.0px;top:126px;">f<span style="font-size:11px;position:relative;top:5px">o,w</span></div>
<div class="t" style="left:41.4px;top:128px;letter-spacing:-0.04px;">Characteristic value of 0,2% proof strength of web</div>
<div class="t" style="left:10.0px;top:149px;">k<span style="font-size:11px;position:relative;top:5px">τ</span></div>
<div class="t" style="left:41.4px;top:151px;letter-spacing:-0.05px;">Shear buckling coefficient</div>
</div>
<div class="a" style="left:1891px;top:106px;width:17px;height:818px;background:#f0f0f0;"></div>
<div class="a" style="left:1893px;top:123px;width:13px;height:730px;background:#c1c1c1;"></div>
<svg class="a" style="left:1895px;top:112px" width="9" height="6"><path d="M0.5 5.5 L4.5 0.5 L8.5 5.5 Z" fill="#9a9a9a"/></svg>
<svg class="a" style="left:1895px;top:912px" width="9" height="6"><path d="M0.5 0.5 L4.5 5.5 L8.5 0.5 Z" fill="#555"/></svg>
<div class="a" style="left:1211px;top:929px;width:29px;height:24px;background:#cce4f7;"></div>
<div class="a" style="left:1244px;top:929px;width:29px;height:24px;background:#cce4f7;"></div>
<div class="a" style="left:1310px;top:929px;width:43px;height:24px;background:#cce4f7;"></div>
<div class="a" style="left:1277px;top:929px;width:29px;height:24px;background:#cce4f7;border:1px solid #0a4e9a"></div>
<svg class="a" style="left:1211px;top:929px" width="29" height="24">
<rect x="4.5" y="2.3" width="9.5" height="8.3" fill="#5b8ef2" stroke="#3a6ad8" stroke-width="0.8"/><path d="M6.5 4.5 V8.5 H11.5 V6.5 H8.5 V4.5 Z" fill="#b8d0ff"/>
<path d="M18 6.2 C21 5.5 23.2 6.8 23 9.8" fill="none" stroke="#555" stroke-width="1.3"/><path d="M20.5 8.6 L23 11.6 L25.5 8.6 Z" fill="#555"/>
<path d="M11.5 18.5 C8.5 18.5 7.2 17 7.3 14.2" fill="none" stroke="#555" stroke-width="1.3"/><path d="M4.8 15 L7.3 12 L9.8 15 Z" fill="#555"/>
<path d="M13.5 13 L16 11.2 H24 V19.5 L21.5 21.4 H13.5 Z" fill="#7ea6e0" stroke="#4a70b0" stroke-width="0.7"/>
<path d="M13.5 16.5 H21.5 M21.5 13 V21.4 M21.5 13 L24 11.2" stroke="#4a70b0" stroke-width="0.7" fill="none"/>
<rect x="14.3" y="13.6" width="6.4" height="2.2" fill="#a8c8f0"/><rect x="14.3" y="17.2" width="6.4" height="3.4" fill="#5a82c8"/>
</svg>
<svg class="a" style="left:1244px;top:929px" width="29" height="24">
<path d="M7 2.7 H9.8 M7 10.2 H9.8" stroke="#666" stroke-width="1"/>
<path d="M8.3 12 V17" stroke="#666" stroke-width="1.4"/><path d="M5.2 16 L8.3 21.5 L11.4 16 Z" fill="#666"/>
<path d="M13.5 2.7 H23 M13.5 6.4 H23 M13.5 10.2 H23 M13.5 13.9 H23 M13.5 17.7 H23 M13.5 21.4 H23" stroke="#707070" stroke-width="1.1"/>
</svg>
<svg class="a" style="left:1277px;top:929px" width="29" height="24" font-family="Liberation Sans" font-weight="bold" fill="#5a5a5a">
<text x="3.6" y="9.9" font-size="9.5">x</text><text x="3.6" y="19.5" font-size="9.5">y</text>
<text x="17.6" y="9.9" font-size="9.5">7</text><text x="17.6" y="21.4" font-size="9.5">4</text>
<path d="M3.8 11.4 H10 M18 11.4 H24" stroke="#5a5a5a" stroke-width="1"/><path d="M11.8 10.2 H16.3 M11.8 12.7 H16.3" stroke="#5a5a5a" stroke-width="1"/>
</svg>
<svg class="a" style="left:1310px;top:929px" width="43" height="24">
<rect x="6.3" y="2.3" width="11.6" height="4.5" fill="#666"/>
<rect x="2.1" y="8.1" width="20" height="8.7" rx="2" fill="#666"/><rect x="18.5" y="10.5" width="2" height="1" fill="#ddd"/>
<rect x="5.8" y="15.2" width="12.5" height="6.6" fill="#fff" stroke="#666" stroke-width="1"/><path d="M8 17.5 H16 M8 19.5 H16" stroke="#777" stroke-width="0.8"/>
<path d="M30 10.2 L37.9 10.2 L34 15.2 Z" fill="#111"/>
</svg>
<div class="a" style="left:12px;top:980px;width:29px;height:24px;background:#cce4f7;"></div>
<svg class="a" style="left:12px;top:980px" width="29" height="24">
<circle cx="16" cy="11" r="7.5" fill="#666"/><path d="M9 15 L5 21 L13 17 Z" fill="#666"/>
<text x="12.5" y="15.5" font-family="Liberation Sans" font-weight="bold" font-size="11" fill="#fff">?</text>
</svg>
<div class="a" style="left:54px;top:980px;width:29px;height:24px;background:#cce4f7;"></div>
<svg class="a" style="left:54px;top:980px" width="29" height="24">
<rect x="4" y="2" width="20" height="5" fill="#90e070" stroke="#6ab04a" stroke-width="0.8"/>
<path d="M8 4.5 V7 M12 4.5 V7 M16 4.5 V7 M20 4.5 V7" stroke="#4a8a3a" stroke-width="0.8"/>
<text x="3.5" y="18.5" font-family="Liberation Sans" font-size="11" fill="#000">0,</text>
<text x="12.5" y="18.5" font-family="Liberation Sans" font-size="11" fill="#3a6ae0">00</text>
<rect x="13" y="20" width="11" height="1.2" fill="#3a6ae0"/>
</svg>
<div class="a" style="left:1806px;top:981px;width:101px;height:26px;background:#fdfdfd;border:1px solid #cfcfcf;border-radius:4px"></div>
<div class="t" style="left:1856.0px;top:988px;letter-spacing:-0.81px;transform:translateX(-50%);">Close</div>
</body></html>
